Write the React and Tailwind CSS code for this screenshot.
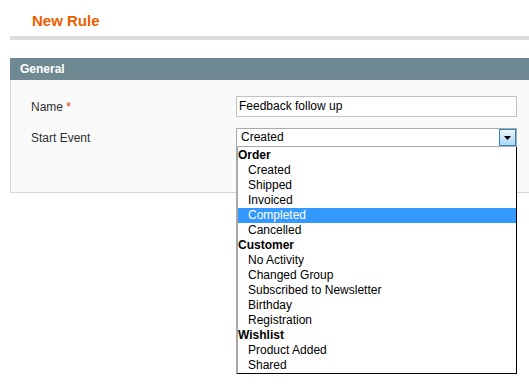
import React from 'react';

const groups = [
    { label: 'Order', items: ['Created', 'Shipped', 'Invoiced', 'Completed', 'Cancelled'] },
    { label: 'Customer', items: ['No Activity', 'Changed Group', 'Subscribed to Newsletter', 'Birthday', 'Registration'] },
    { label: 'Wishlist', items: ['Product Added', 'Shared'] },
];

const App = () => {
    return (
        <div className="relative w-[529px] h-[386px] bg-white overflow-hidden text-[12px] font-['Liberation_Sans',Arial,sans-serif]">
            {/* Title */}
            <div className="h-[36px] pl-[32px] pt-[12px]">
                <h1 className="text-[15px] leading-[18px] font-bold text-[#eb5e00]">New Rule</h1>
            </div>
            <div className="ml-[10px] h-[4px] bg-[#dddddd]" />

            {/* Fieldset */}
            <div className="mt-[18px] ml-[10px]">
                <div className="h-[22px] px-[10px] bg-[#6f8992] text-white font-bold leading-[22px]">General</div>
                <div className="h-[113px] bg-[#fafafa] border-l border-b border-[#d6d6d6] pl-[20px] pt-[16px]">
                    <div className="flex items-center h-[21px]">
                        <label className="w-[205px] text-[#2f2f2f]">
                            Name <span className="text-[#eb340a]">*</span>
                        </label>
                        <div className="w-[281px] h-[21px] bg-white border border-[#c2c2c2] px-[2px] leading-[19px] text-black">
                            Feedback follow up
                        </div>
                    </div>
                    <div className="flex items-center h-[19px] mt-[11px]">
                        <label className="w-[205px] text-[#2f2f2f]">Start Event</label>
                        <div className="w-[281px] h-[19px] bg-white border border-[#a5acb2] flex items-center justify-between">
                            <span className="pl-[4px] leading-[17px] text-black">Created</span>
                            <span className="w-[17px] h-[17px] border border-[#3c7fb1] bg-gradient-to-b from-[#eaf6fd] to-[#a7d9f5] flex items-center justify-center">
                                <svg width="7" height="4" viewBox="0 0 7 4">
                                    <path d="M0 0h7L3.5 4z" fill="#000" />
                                </svg>
                            </span>
                        </div>
                    </div>
                </div>
            </div>

            {/* Open dropdown list */}
            <div className="absolute left-[236px] top-[147px] w-[281px] bg-white border-l-2 border-l-[#a9a9a9] border-r border-b border-r-black border-b-black text-black pt-[1px]">
                {groups.map(g => (
                    <div key={g.label}>
                        <div className="h-[15px] leading-[15px] font-bold">{g.label}</div>
                        {g.items.map(item => (
                            <div
                                key={item}
                                className={`h-[15px] leading-[15px] pl-[10px] ${item === 'Completed' ? 'bg-[#3399ff] text-white' : ''}`}
                            >
                                {item}
                            </div>
                        ))}
                    </div>
                ))}
            </div>
        </div>
    );
};

export default App;
